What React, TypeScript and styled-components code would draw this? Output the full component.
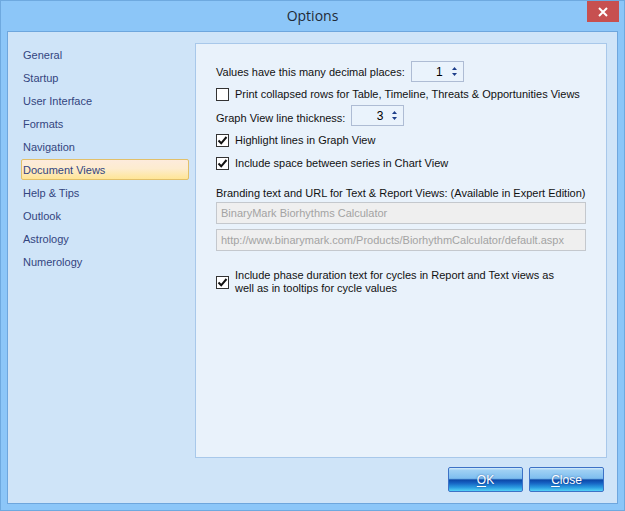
import React from "react";
import styled, { createGlobalStyle } from "styled-components";

const GlobalStyle = createGlobalStyle`
	html, body {
		margin: 0;
		padding: 0;
		background: #8dc6f7;
	}
	* {
		box-sizing: border-box;
	}
`;

const uiFont = `"Liberation Sans", Arial, sans-serif`;

const Window = styled.div`
	width: 625px;
	height: 511px;
	background: #8cc6f8;
	border: 1px solid #6ea9df;
	display: flex;
	flex-direction: column;
	font-family: ${uiFont};
	font-size: 11px;
	color: #111;
`;

const TitleBar = styled.div`
	height: 30px;
	display: grid;
	grid-template-columns: 1fr auto 1fr;
	align-items: start;
`;

const Title = styled.div`
	grid-column: 2;
	padding-top: 5px;
	font-size: 14px;
	color: #1f2a36;
	font-family: "Open Sans", ${uiFont};
`;

const CloseButton = styled.div`
	grid-column: 3;
	justify-self: end;
	margin-right: 5px;
	width: 32px;
	height: 21px;
	background: #c75050;
	display: flex;
	align-items: center;
	justify-content: center;
`;

const Client = styled.div`
	margin: 0 6px 6px 6px;
	flex: 1;
	background: #cfe4f8;
	border: 1px solid #6ea6dd;
	display: flex;
	flex-direction: column;
	padding: 11px 10px 0 0;
`;

const Body = styled.div`
	display: flex;
	gap: 6px;
`;

const Nav = styled.div`
	width: 181px;
	padding: 1px 0 0 13px;
	display: flex;
	flex-direction: column;
	gap: 2px;
`;

const NavItem = styled.div<{ $selected?: boolean }>`
	height: 21px;
	padding: 1px 0 0 1px;
	line-height: 19px;
	border: 1px solid ${(p) => (p.$selected ? "#e2c06a" : "transparent")};
	border-radius: 2px;
	background: ${(p) =>
		p.$selected
			? "linear-gradient(to bottom, #fdebdc 0%, #fdeccf 45%, #ffe596 100%)"
			: "transparent"};
	color: #33457f;
	white-space: nowrap;
`;

const Panel = styled.div`
	width: 412px;
	height: 415px;
	background: #e9f2fb;
	border: 1px solid #a8c8ea;
	padding: 17px 0 0 20px;
	display: flex;
	flex-direction: column;
`;

const Row = styled.div<{ $top?: number; $height?: number }>`
	display: flex;
	align-items: center;
	gap: 6px;
	margin-top: ${(p) => p.$top ?? 0}px;
	height: ${(p) => (p.$height ? `${p.$height}px` : "auto")};
	white-space: nowrap;
`;

const SpinBox = styled.div`
	width: 53px;
	height: 21px;
	flex: none;
	border: 1px solid #aebcd4;
	background: #eaf3fc;
	display: flex;
	align-items: center;
	justify-content: flex-end;
	padding-right: 6px;
	gap: 9px;
`;

const SpinValue = styled.span`
	font-size: 12px;
	color: #000;
`;

const Arrows = styled.div`
	display: flex;
	flex-direction: column;
	gap: 3px;
`;

const Box = styled.div`
	width: 13px;
	height: 13px;
	flex: none;
	background: #fff;
	border: 1px solid #333;
	display: flex;
	align-items: center;
	justify-content: center;
`;

const Label = styled.span<{ $drop?: number }>`
	color: #111;
	padding-top: ${(p) => p.$drop ?? 0}px;
`;

const Caption = styled.div`
	margin-top: 12px;
	height: 15px;
	line-height: 15px;
	color: #111;
	white-space: nowrap;
`;

const TextField = styled.div<{ $top: number }>`
	margin-top: ${(p) => p.$top}px;
	width: 370px;
	height: 22px;
	line-height: 20px;
	background: #efefef;
	border: 1px solid #c4c8cd;
	color: #a3a3a3;
	padding: 0 0 0 4px;
	white-space: nowrap;
	overflow: hidden;
`;

const MultiLabel = styled.span`
	line-height: 13px;
	white-space: normal;
	width: 340px;
`;

const Buttons = styled.div`
	display: flex;
	justify-content: flex-end;
	gap: 6px;
	padding: 9px 3px 0 0;
`;

const Button = styled.div`
	width: 75px;
	height: 25px;
	border: 1px solid #3d72c6;
	border-radius: 2px;
	background: linear-gradient(
		to bottom,
		#d6ecfb 0%,
		#9fd0f4 10%,
		#7ebeef 45%,
		#0c48a8 52%,
		#1561c2 65%,
		#2c9ee2 85%,
		#55d2f6 100%
	);
	color: #fff;
	display: flex;
	align-items: center;
	justify-content: center;
	font-size: 12px;
	text-shadow: 0 0 2px rgba(0, 40, 120, 0.6);
	u {
		text-decoration-thickness: 1px;
		text-underline-offset: 2px;
	}
`;

const Check = () => (
	<svg width="11" height="11" viewBox="0 0 11 11">
		<path d="M1.5 5.5 L4.2 8.3 L9.5 2" fill="none" stroke="#111" strokeWidth="2" />
	</svg>
);

const Spin = ({ value }: { value: number }) => (
	<SpinBox>
		<SpinValue>{value}</SpinValue>
		<Arrows>
			<svg width="5" height="3" viewBox="0 0 5 3">
				<path d="M0 3 L2.5 0 L5 3 Z" fill="#1d3e8a" />
			</svg>
			<svg width="5" height="3" viewBox="0 0 5 3">
				<path d="M0 0 L2.5 3 L5 0 Z" fill="#1d3e8a" />
			</svg>
		</Arrows>
	</SpinBox>
);

const CheckRow = ({
	checked,
	top,
	children,
}: {
	checked?: boolean;
	top: number;
	children: React.ReactNode;
}) => (
	<Row $top={top} $height={22}>
		<Box>{checked && <Check />}</Box>
		<Label>{children}</Label>
	</Row>
);

const navItems = [
	"General",
	"Startup",
	"User Interface",
	"Formats",
	"Navigation",
	"Document Views",
	"Help & Tips",
	"Outlook",
	"Astrology",
	"Numerology",
];

export default function App() {
	return (
		<>
			<GlobalStyle />
			<Window>
				<TitleBar>
					<Title>Options</Title>
					<CloseButton>
						<svg width="10" height="10" viewBox="0 0 10 10">
							<path d="M1 1 L9 9 M9 1 L1 9" stroke="#fff" strokeWidth="2" />
						</svg>
					</CloseButton>
				</TitleBar>
				<Client>
					<Body>
						<Nav>
							{navItems.map((item) => (
								<NavItem key={item} $selected={item === "Document Views"}>
									{item}
								</NavItem>
							))}
						</Nav>
						<Panel>
							<Row $height={21}>
								<Label $drop={1}>Values have this many decimal places:</Label>
								<Spin value={1} />
							</Row>
							<CheckRow top={1}>
								Print collapsed rows for Table, Timeline, Threats &amp; Opportunities Views
							</CheckRow>
							<Row $height={21}>
								<Label $drop={4}>Graph View line thickness:</Label>
								<Spin value={3} />
							</Row>
							<CheckRow checked top={3}>
								Highlight lines in Graph View
							</CheckRow>
							<CheckRow checked top={1}>
								Include space between series in Chart View
							</CheckRow>
							<Caption>
								Branding text and URL for Text &amp; Report Views: (Available in Expert Edition)
							</Caption>
							<TextField $top={1}>BinaryMark Biorhythms Calculator</TextField>
							<TextField $top={5}>
								http://www.binarymark.com/Products/BiorhythmCalculator/default.aspx
							</TextField>
							<Row $top={18}>
								<Box>
									<Check />
								</Box>
								<MultiLabel>
									Include phase duration text for cycles in Report and Text views as well
									as in tooltips for cycle values
								</MultiLabel>
							</Row>
						</Panel>
					</Body>
					<Buttons>
						<Button>
							<span>
								<u>O</u>K
							</span>
						</Button>
						<Button>
							<span>
								<u>C</u>lose
							</span>
						</Button>
					</Buttons>
				</Client>
			</Window>
		</>
	);
}
